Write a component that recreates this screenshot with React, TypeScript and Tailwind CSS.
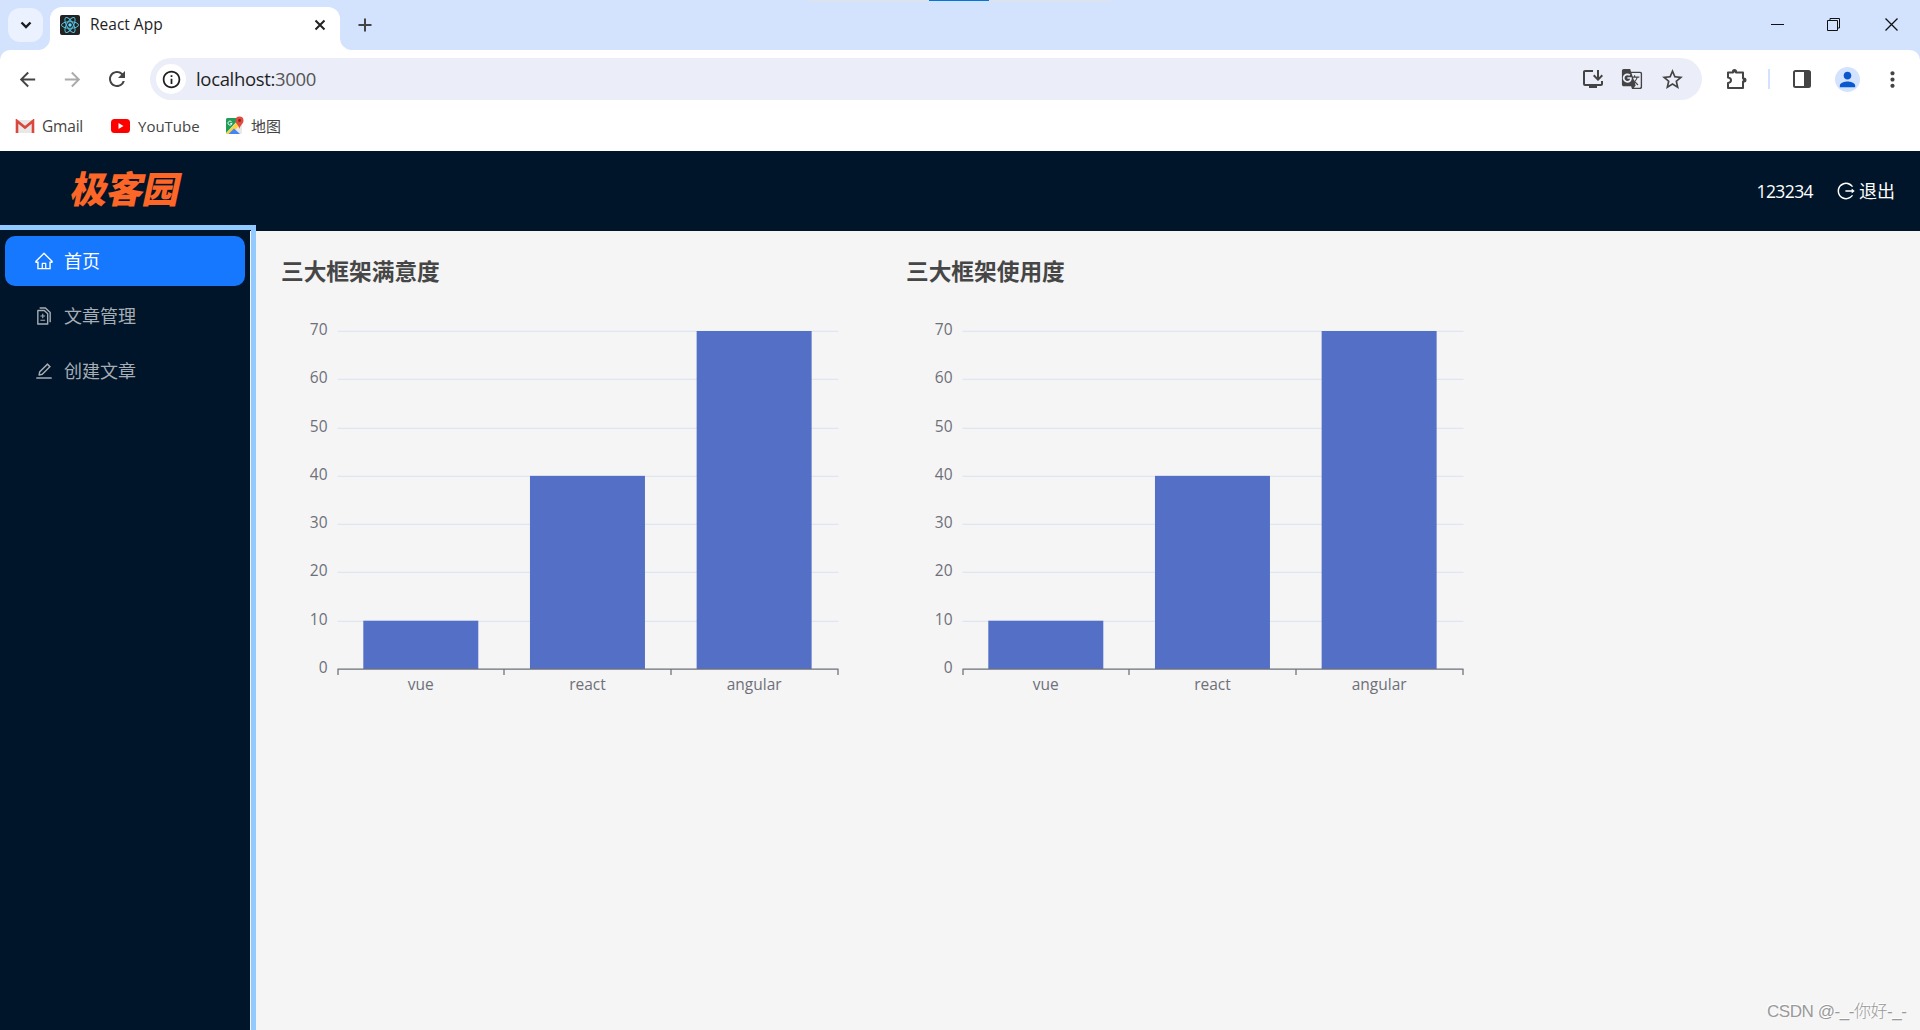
import type { ReactNode } from "react"
import {
  AiOutlineDiff,
  AiOutlineEdit,
  AiOutlineHome,
  AiOutlineLogout,
} from "react-icons/ai"
import {
  MdArrowBack,
  MdArrowForward,
  MdGTranslate,
  MdInfoOutline,
  MdMoreVert,
  MdOutlineInstallDesktop,
  MdPerson,
  MdRefresh,
  MdStarOutline,
} from "react-icons/md"

const categories = ["vue", "react", "angular"]
const values = [10, 40, 70]
const ticks = [0, 10, 20, 30, 40, 50, 60, 70]

export default function App() {
  return (
    <div className="flex h-[1030px] w-[1920px] flex-col overflow-hidden bg-[#f5f5f5] font-['Open_Sans','Noto_Sans_CJK_SC',sans-serif]">
      <TabStrip />
      <div className="bg-[#d3e2fd]">
        <div className="h-[101px] rounded-t-[10px] bg-white">
          <Toolbar />
          <Bookmarks />
        </div>
      </div>
      <Header />
      <div className="flex min-h-0 flex-1">
        <Sider />
        <main className="flex pl-[20px]">
          <BarChart title="三大框架满意度" />
          <BarChart title="三大框架使用度" />
        </main>
      </div>
      <div className="absolute top-[1000px] left-[1767px] font-['Liberation_Sans','Noto_Sans_CJK_SC',sans-serif] text-[17px] leading-6 font-light tracking-[-0.45px] whitespace-nowrap text-[#999] [text-shadow:-1px_-1px_0_#fff]">
        CSDN @-_-你好-_-
      </div>
    </div>
  )
}

function TabStrip() {
  return (
    <div className="relative flex h-[50px] shrink-0 bg-[#d3e2fd] pl-2">
      <div className="absolute top-0 left-[809px] flex h-px w-[301px] bg-[#e2e2e2] pl-[120px]">
        <div className="w-[60px] bg-[#0078d7]" />
      </div>
      <div className="mt-2 flex h-[34px] w-[35px] items-center justify-center rounded-xl bg-[#ebf1fe]">
        <svg width="12" height="8" viewBox="0 0 12 8" fill="none">
          <path d="M1.5 1.5 6 6l4.5-4.5" stroke="#1c1c1c" strokeWidth="2.4" />
        </svg>
      </div>
      <div className="relative mt-[7px] ml-[7px] flex h-[43px] w-[290px] items-center rounded-t-xl bg-white pr-[14px] pb-[7px] pl-[10px]">
        <svg className="absolute bottom-0 -left-3" width="12" height="12">
          <path d="M12 0v12H0A12 12 0 0 0 12 0" fill="#fff" />
        </svg>
        <svg className="absolute -right-3 bottom-0" width="12" height="12">
          <path d="M0 0v12h12A12 12 0 0 1 0 0" fill="#fff" />
        </svg>
        <ReactLogo />
        <span className="ml-[10px] flex-1 text-[15.5px] text-[#1f1f1f]">
          React App
        </span>
        <svg width="12" height="12" viewBox="0 0 12 12">
          <path d="m1.5 1.5 9 9m0-9-9 9" stroke="#222" strokeWidth="2" />
        </svg>
      </div>
      <svg className="mt-[18px] ml-[18px]" width="14" height="14">
        <path d="M7 .5v13M.5 7h13" stroke="#444" strokeWidth="2" />
      </svg>
      <svg
        className="absolute top-[17px] left-[1770px]"
        width="130"
        height="15"
        fill="none"
        stroke="#111"
      >
        <path d="M1 7.5h13M57.500 3.500h10v10h-10zM60 3V1.500h9.500V11H68" />
        <path d="m115.500 1.500 12 12m0-12-12 12" strokeWidth="1.300" />
      </svg>
    </div>
  )
}

function ReactLogo() {
  return (
    <svg width="20" height="20" viewBox="0 0 20 20">
      <rect width="20" height="20" rx="2" fill="#222" />
      <g fill="none" stroke="#53c1de" strokeWidth="1">
        <ellipse cx="10" cy="10" rx="8.500" ry="3.300" />
        <ellipse cx="10" cy="10" rx="8.500" ry="3.300" transform="rotate(60 10 10)" />
        <ellipse cx="10" cy="10" rx="8.500" ry="3.300" transform="rotate(120 10 10)" />
      </g>
      <circle cx="10" cy="10" r="1.700" fill="#61dafb" />
    </svg>
  )
}

function Toolbar() {
  return (
    <div className="flex h-[58px] items-center pl-[16px] text-[#444]">
      <MdArrowBack size={23} />
      <MdArrowForward size={23} className="ml-[22px] text-[#aaa]" />
      <MdRefresh size={24} className="ml-[21px]" />
      <div className="ml-[21px] flex h-[42px] w-[1552px] items-center rounded-full bg-[#ebeef8] pl-[6px]">
        <div className="flex size-[30px] items-center justify-center rounded-full bg-white">
          <MdInfoOutline size={21} className="text-[#1f1f1f]" />
        </div>
        <span className="ml-[10px] text-[18.5px] tracking-[-0.33px] text-[#1f1f1f]">
          localhost:<span className="text-[#555]">3000</span>
        </span>
        <MdOutlineInstallDesktop size={24} className="ml-auto" />
        <MdGTranslate size={22} className="ml-[16px]" />
        <MdStarOutline size={25} className="mr-[17px] ml-[17px]" />
      </div>
      <svg className="ml-[23px]" width="23" height="23" viewBox="0 0 23 23">
        <path
          d="M3 4.500h5v-1a1.500 1.500 0 0 1 3 0v1h7v6h1a1.500 1.500 0 0 1 0 3h-1v6.500H3v-5c4-.5 4-5 0-5.500z"
          fill="none"
          stroke="#444"
          strokeWidth="2"
          strokeLinejoin="round"
        />
        <path d="M7 4.500a2.500 2.500 0 0 1 5 0zM18 9.500a2.500 2.500 0 0 1 0 5z" fill="#444" />
      </svg>
      <div className="ml-[20px] h-5 w-[2px] bg-[#d3e2fd]" />
      <svg className="ml-[23px]" width="18" height="18">
        <rect x="1" y="1" width="16" height="16" rx="1.500" fill="none" stroke="#444" strokeWidth="2" />
        <path d="M11 1h6v16h-6z" fill="#444" />
      </svg>
      <div className="ml-[24px] flex size-[25px] items-center justify-center rounded-full bg-[#d3e2fd]">
        <MdPerson size={23} className="text-[#0b57d0]" />
      </div>
      <MdMoreVert size={25} className="ml-[20px]" />
    </div>
  )
}

function Bookmarks() {
  return (
    <div className="flex h-[36px] items-center pl-[15px] text-[15px] leading-5 text-[#444]">
      <svg width="20" height="15" viewBox="0 0 20 15">
        <rect x="1" y="1" width="18" height="13" rx="1" fill="#e8e8e8" />
        <path d="M2 14V2l8 6.500L18 2v12" fill="none" stroke="#d9473d" strokeWidth="2.600" />
      </svg>
      <span className="ml-[7px] w-[42px] text-[15.5px] tracking-[-0.2px]">Gmail</span>
      <svg className="ml-[27px]" width="19" height="14" viewBox="0 0 19 14">
        <rect width="19" height="14" rx="3.500" fill="#f00" />
        <path d="M7.500 4v6l5-3z" fill="#fff" />
      </svg>
      <span className="ml-[8px] w-[60px]">YouTube</span>
      <svg className="ml-[27px]" width="20" height="20" viewBox="0 0 20 20">
        <rect x="1" y="2" width="16" height="16" rx="1.500" fill="#e8e8e8" />
        <path d="M1 3.500Q1 2 2.500 2H15L1 17z" fill="#1f9d58" />
        <path d="M1 17.500 12 6l3 3-9 9H1.500z" fill="#fdd23c" />
        <path d="m3.500 18 5.500-5.500 6 5.500z" fill="#4285f4" />
        <path d="m6.800 6.200a2 2 0 1 0 .2 1.300H5.300" fill="none" stroke="#fff" strokeWidth="1" />
        <path d="M14.500 13c-.5-4-4-5-4-8.500a4 4 0 0 1 8 0c0 3.500-3.500 4.500-4 8.500" fill="#e04a3f" />
        <circle cx="14.500" cy="4.500" r="1.400" fill="#8c2019" />
      </svg>
      <span className="ml-[6px]">地图</span>
    </div>
  )
}

function Header() {
  return (
    <header className="flex h-20 shrink-0 bg-[#001529] text-[17.5px] text-white">
      <div className="mt-[11px] ml-[63px] origin-bottom -skew-x-12 font-['Noto_Sans_CJK_SC',sans-serif] text-[37px] leading-[50px] font-black tracking-[-1px] text-[#fc6627]">
        极客园
      </div>
      <div className="mr-[25px] ml-auto flex items-center">
        <span className="tracking-[-0.6px]">123234</span>
        <AiOutlineLogout size={20} className="ml-[23px]" />
        <span className="ml-[3px] text-[18px]">退出</span>
      </div>
    </header>
  )
}

function Sider() {
  return (
    <aside className="relative w-[256px]">
      <div className="h-full w-[250px] bg-[#001529] pt-[5px]">
        <MenuItem icon={<AiOutlineHome size={20} />} label="首页" active />
        <MenuItem icon={<AiOutlineDiff size={20} />} label="文章管理" />
        <MenuItem icon={<AiOutlineEdit size={20} />} label="创建文章" />
      </div>
      {/* focus ring round the sider, its left and bottom sides fall off screen */}
      <div className="absolute -top-[6px] right-0 bottom-0 left-0 border-t-[5px] border-r-[5px] border-[#91caff]" />
    </aside>
  )
}

function MenuItem({
  icon,
  label,
  active,
}: {
  icon: ReactNode
  label: string
  active?: boolean
}) {
  return (
    <div
      className={
        "mx-[5px] mb-[5px] flex h-[50px] items-center gap-[10px] rounded-[10px] pl-[29px] text-[18px] " +
        (active ? "bg-[#1677ff] text-white" : "text-[#a6adb4]")
      }
    >
      {icon}
      <span>{label}</span>
    </div>
  )
}

function BarChart({ title }: { title: string }) {
  const left = 62
  const bottom = 413
  const step = 338 / 7
  const band = 500 / 3

  return (
    <section className="w-[625px] pt-[25px]">
      <svg width="625" height="500" fontSize="15.500" fill="#6e7079">
        <text x="5" y="23.500" fontSize="22.700" fontWeight="bold" fill="#464646">
          {title}
        </text>
        {ticks.map((tick, i) => {
          const y = Math.round(bottom - i * step)
          return (
            <g key={tick}>
              {i > 0 && (
                <path d={`M${left - 0.5} ${y + 0.3}h501`} stroke="#e0e6f1" strokeWidth="1.250" />
              )}
              <text x={left - 10.5} y={y + 4} textAnchor="end">
                {tick}
              </text>
            </g>
          )
        })}
        {values.map((value, i) => {
          const height = (value / 10) * step
          return (
            <rect
              key={i}
              x={left + 25.3 + i * band}
              y={bottom - height}
              width="115"
              height={height}
              fill="#5470c6"
            />
          )
        })}
        <path
          d={`M${left - 0.5} ${bottom}h501M62 413v6M228 413v6M395 413v6M562 413v6`}
          stroke="#6e7079"
          strokeWidth="1.250"
        />
        {categories.map((name, i) => (
          <text key={name} x={left - 0.5 + band * (i + 0.5)} y="434" textAnchor="middle">
            {name}
          </text>
        ))}
      </svg>
    </section>
  )
}
